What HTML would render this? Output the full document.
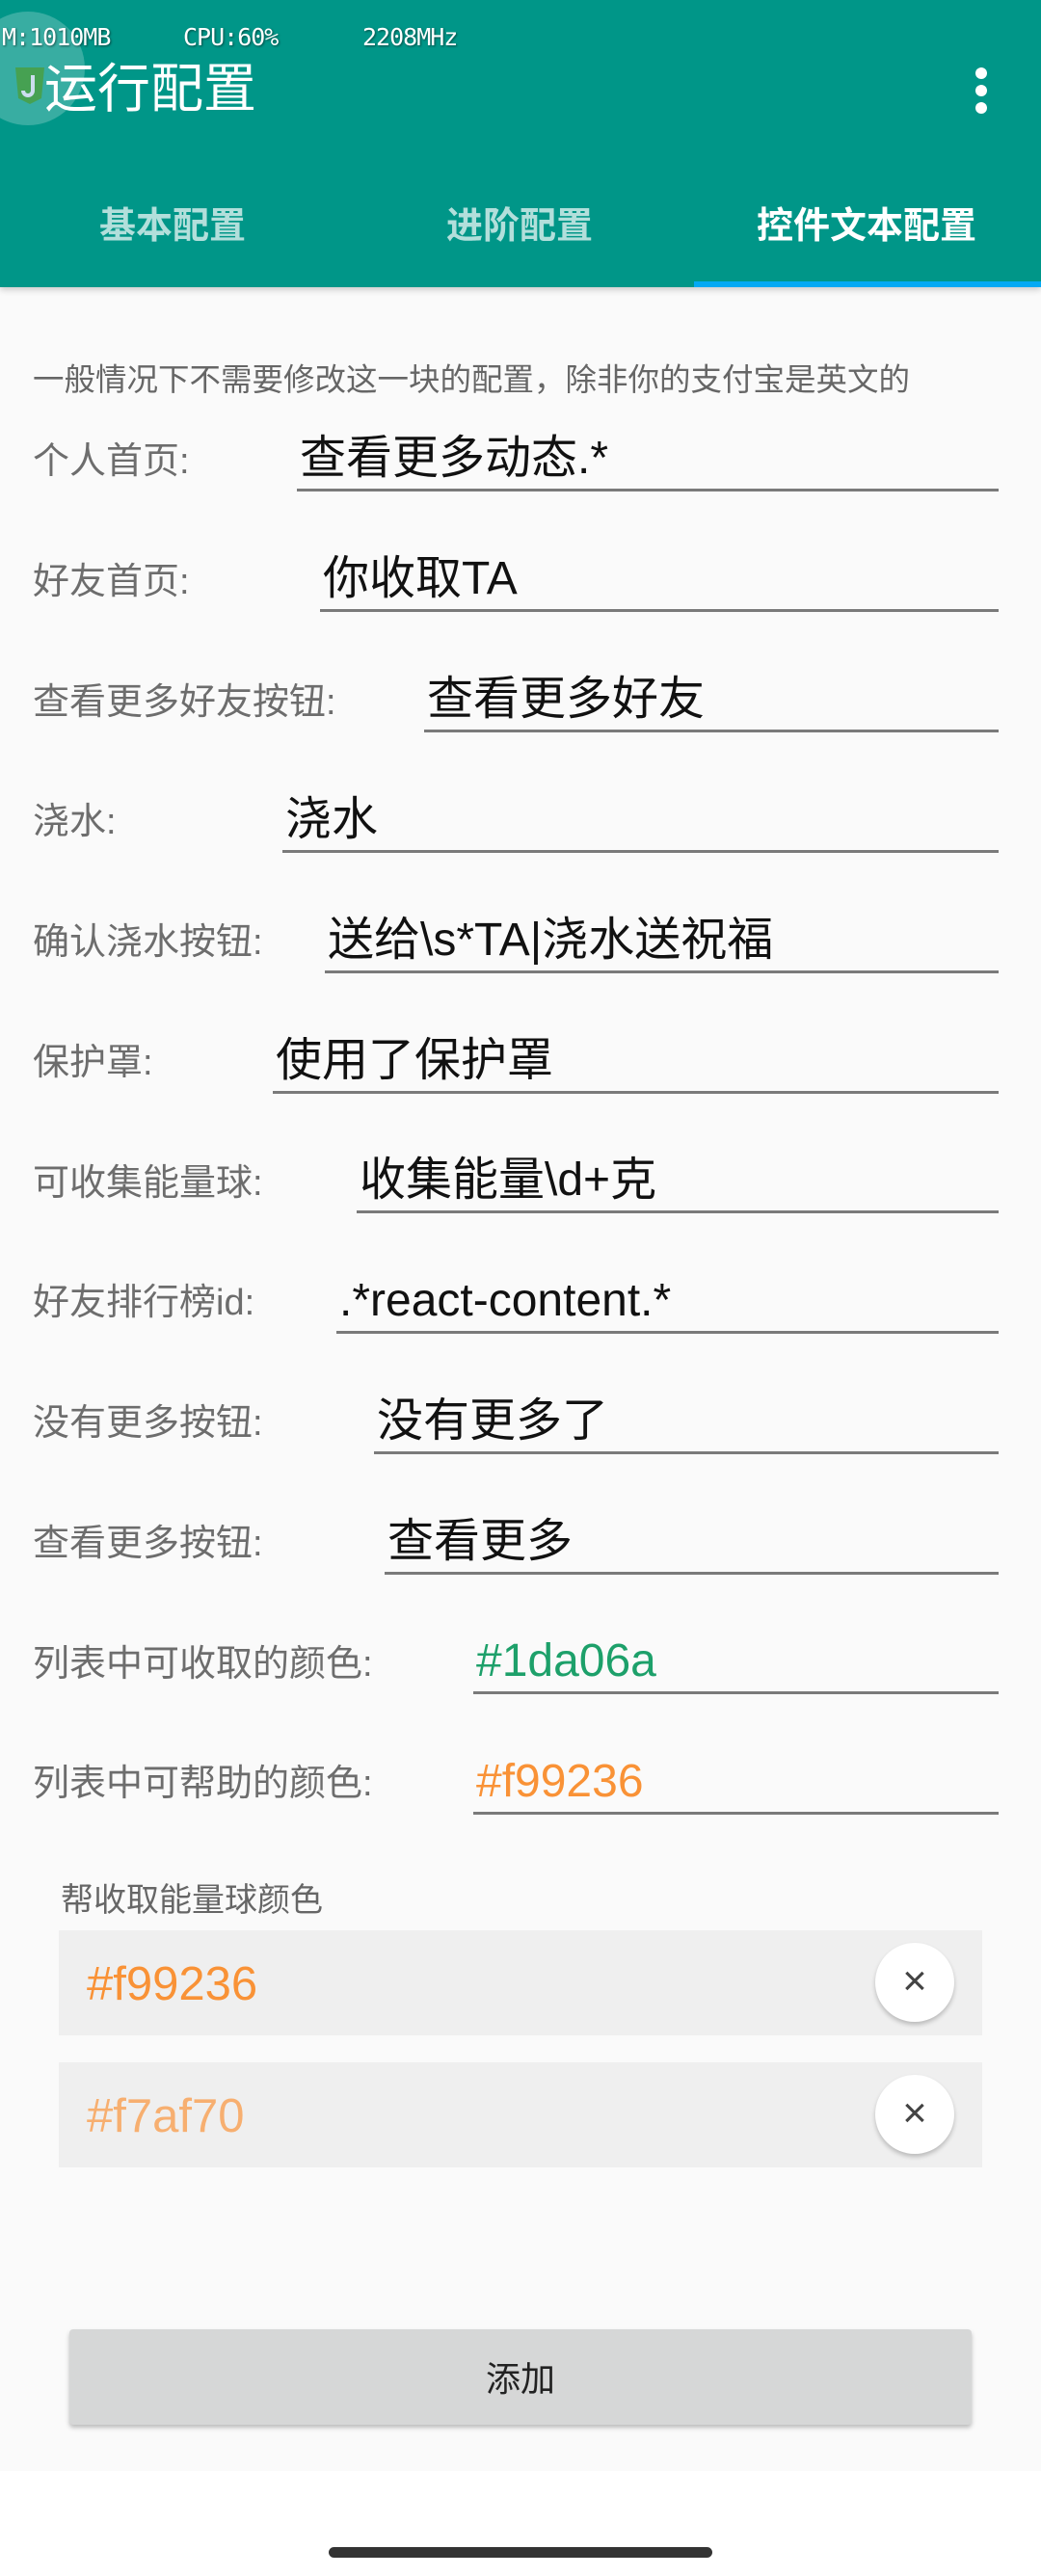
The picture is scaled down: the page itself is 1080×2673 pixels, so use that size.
<!DOCTYPE html>
<html><head><meta charset="utf-8">
<style>
*{margin:0;padding:0;box-sizing:border-box}
body{width:1080px;height:2673px;background:#fafafa;font-family:"Liberation Sans","Noto Sans CJK SC",sans-serif;position:relative;overflow:hidden}
.hdr{position:absolute;left:0;top:0;width:1080px;height:298px;background:#009688;box-shadow:0 3px 6px rgba(0,0,0,.18)}
.stat{position:absolute;top:24px;color:#fff;font-size:25px;font-family:"DejaVu Sans Mono","Liberation Mono",monospace;text-shadow:1px 1px 2px rgba(0,0,0,.5);letter-spacing:-1px}
.title{position:absolute;left:46px;top:60px;color:#fff;font-size:55px;line-height:64px}
.dots{position:absolute;left:1012px;top:70px;width:14px}
.dots i{display:block;width:12px;height:12px;border-radius:50%;background:#fff;margin-bottom:6px}
.tab{position:absolute;top:212px;font-size:38px;line-height:46px;color:#b2dfdb;transform:translateX(-50%);white-space:nowrap;font-weight:bold}
.ind{position:absolute;left:720px;top:292px;width:360px;height:6px;background:#03a9f4}
.fab{position:absolute;left:-30px;top:12px;width:118px;height:118px;border-radius:50%;background:rgba(255,255,255,.22)}
.desc{position:absolute;left:34px;top:368px;font-size:32.5px;color:#666;white-space:nowrap}
.lbl{position:absolute;left:34px;font-size:38px;color:#6d6d6d;line-height:44px;white-space:nowrap;margin-top:5px}
.inp{position:absolute;right:44px;height:76px;border-bottom:3px solid #7a7a7a;font-size:48px;line-height:64px;color:#111;padding-left:3px;padding-top:10px;white-space:nowrap}
.sec{position:absolute;left:63px;top:1944px;font-size:34px;color:#666}
.box{position:absolute;left:61px;width:958px;height:109px;background:#efefef}
.box span{position:absolute;left:29px;top:24px;font-size:49px;line-height:64px}
.x{position:absolute;left:847px;top:13px;width:82px;height:82px;border-radius:50%;background:#fff;box-shadow:0 3px 5px rgba(0,0,0,.22);text-align:center;line-height:80px;font-size:44px;color:#444}
.btn{position:absolute;left:72px;top:2417px;width:936px;height:99px;background:#d6d7d7;border-radius:4px;box-shadow:0 3px 5px rgba(0,0,0,.25);text-align:center;line-height:104px;font-size:36px;color:#222}
.nav{position:absolute;left:0;top:2564px;width:1080px;height:109px;background:#fff}
.bar{position:absolute;left:341px;top:2643px;width:398px;height:11px;border-radius:6px;background:#333}
</style></head><body>
<div class="hdr">
 <div class="fab"></div>
 <svg style="position:absolute;left:14px;top:68px" width="34" height="42" viewBox="0 0 34 42"><path d="M2 2h30l-3 32-12 6-12-6z" fill="#4a9e3f" opacity=".8"/><path d="M20 10v16a5 5 0 0 1-10 0" stroke="#cde" stroke-width="4" fill="none"/></svg>
 <div class="stat" style="left:2px">M:1010MB</div>
 <div class="stat" style="left:190px">CPU:60%</div>
 <div class="stat" style="left:376px">2208MHz</div>
 <div class="title">运行配置</div>
 <div class="dots"><i></i><i></i><i></i></div>
 <div class="tab" style="left:179px">基本配置</div>
 <div class="tab" style="left:539px">进阶配置</div>
 <div class="tab" style="left:899px;color:#fff">控件文本配置</div>
 <div class="ind"></div>
</div>
<div class="desc">一般情况下不需要修改这一块的配置，除非你的支付宝是英文的</div>

<div class="lbl" style="top:452px">个人首页:</div><div class="inp" style="left:308px;top:434px">查看更多动态.*</div>
<div class="lbl" style="top:577px">好友首页:</div><div class="inp" style="left:332px;top:559px">你收取TA</div>
<div class="lbl" style="top:702px">查看更多好友按钮:</div><div class="inp" style="left:440px;top:684px">查看更多好友</div>
<div class="lbl" style="top:826px">浇水:</div><div class="inp" style="left:293px;top:809px">浇水</div>
<div class="lbl" style="top:951px">确认浇水按钮:</div><div class="inp" style="left:337px;top:934px">送给\s*TA|浇水送祝福</div>
<div class="lbl" style="top:1076px">保护罩:</div><div class="inp" style="left:283px;top:1059px">使用了保护罩</div>
<div class="lbl" style="top:1201px">可收集能量球:</div><div class="inp" style="left:370px;top:1183px">收集能量\d+克</div>
<div class="lbl" style="top:1325px">好友排行榜id:</div><div class="inp" style="left:349px;top:1308px">.*react-content.*</div>
<div class="lbl" style="top:1450px">没有更多按钮:</div><div class="inp" style="left:388px;top:1433px">没有更多了</div>
<div class="lbl" style="top:1575px">查看更多按钮:</div><div class="inp" style="left:399px;top:1558px">查看更多</div>
<div class="lbl" style="top:1700px">列表中可收取的颜色:</div><div class="inp" style="left:491px;top:1682px;color:#1da06a">#1da06a</div>
<div class="lbl" style="top:1824px">列表中可帮助的颜色:</div><div class="inp" style="left:491px;top:1807px;color:#f99236">#f99236</div>

<div class="sec">帮收取能量球颜色</div>
<div class="box" style="top:2003px"><span style="color:#f99236">#f99236</span><div class="x">×</div></div>
<div class="box" style="top:2140px"><span style="color:#f7af70">#f7af70</span><div class="x">×</div></div>
<div class="btn">添加</div>
<div class="nav"></div>
<div class="bar"></div>
</body></html>
